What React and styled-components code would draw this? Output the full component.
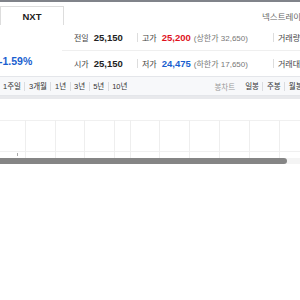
import React from 'react';
import styled, {createGlobalStyle} from 'styled-components';

const GlobalStyle = createGlobalStyle`
body{
    margin:0;
    overflow:hidden;
    background:white;
    font-family:"Liberation Sans", "Noto Sans CJK KR", sans-serif;
}
`

const quotes = [
  [
    {label:'전일', value:'25,150', width:63},
    {label:'고가', value:'25,200', tone:'up', note:'(상한가 32,650)', width:131},
    {label:'거래량', width:40},
  ],
  [
    {label:'시가', value:'25,150', width:63},
    {label:'저가', value:'24,475', tone:'down', note:'(하한가 17,650)', width:131},
    {label:'거래대금', width:40},
  ],
]

const periods = ['1주일', '3개월', '1년', '3년', '5년', '10년']
const candles = ['일봉', '주봉', '월봉']
const gridX = [25, 55, 84, 114, 130, 159, 189, 219, 249, 279]

function App() {
  return (
    <Page>
      <GlobalStyle />
      <TopBar />
      <Header>
        <Tab>NXT</Tab>
        <Market>넥스트레이드</Market>
      </Header>
      <Summary>
        <Change>-1.59%</Change>
        <Quotes>
          {quotes.map((row, i) => (
            <QuoteRow key={i} last={i === quotes.length - 1}>
              {row.map((cell, j) => (
                <Cell key={cell.label} w={cell.width} sep={j > 0}>
                  <Label>{cell.label}</Label>
                  {cell.value && <Value tone={cell.tone}>{cell.value}</Value>}
                  {cell.note && <Note>{cell.note}</Note>}
                </Cell>
              ))}
            </QuoteRow>
          ))}
        </Quotes>
      </Summary>
      <PeriodBar>
        <Group>
          {periods.map((p, i) => (
            <Item key={p} sep={i > 0}>{p}</Item>
          ))}
        </Group>
        <Group right>
          <Muted>봉차트</Muted>
          {candles.map((c, i) => (
            <Item key={c} sep={i > 0}>{c}</Item>
          ))}
        </Group>
      </PeriodBar>
      <Stripe />
      <Chart>
        <svg width="300" height="59" viewBox="0 0 300 59">
          <line x1="0" y1="21.5" x2="300" y2="21.5" stroke="#f0f0f0" />
          <line x1="0" y1="52.5" x2="300" y2="52.5" stroke="#f0f0f0" />
          {gridX.map((x) => (
            <line key={x} x1={x + 0.5} y1="21" x2={x + 0.5} y2="59" stroke="#eeeeee" />
          ))}
          <line x1="17.5" y1="54" x2="17.5" y2="57" stroke="#aaaaaa" />
        </svg>
      </Chart>
      <Scroll>
        <Thumb />
      </Scroll>
    </Page>
  )
}

const Page = styled.div`
width:300px;
height:300px;
background:white;
overflow:hidden;
`
const TopBar = styled.div`
height:2px;
background:#80838a;
`
const Header = styled.div`
height:23px;
display:flex;
justify-content:space-between;
align-items:flex-end;
`
const Tab = styled.div`
width:62px;
height:18px;
border:1px solid #dddddd;
border-bottom:none;
display:flex;
align-items:center;
justify-content:center;
font-size:9.5px;
font-weight:700;
color:#222;
`
const Market = styled.div`
align-self:center;
margin-top:5px;
width:38px;
overflow:hidden;
white-space:nowrap;
font-size:8.5px;
color:#666;
`
const Summary = styled.div`
display:flex;
height:51px;
`
const Change = styled.div`
width:63px;
flex-shrink:0;
margin-left:-1px;
padding-top:30px;
font-size:10.5px;
font-weight:700;
color:#1a5fd0;
`
const Quotes = styled.div`
flex:1;
display:flex;
flex-direction:column;
`
const QuoteRow = styled.div`
height:26px;
display:flex;
align-items:center;
padding-left:12px;
border-bottom:${p => p.last ? 'none' : '1px solid #efefef'};
box-sizing:border-box;
`
const Cell = styled.div`
position:relative;
width:${p => p.w}px;
flex-shrink:0;
display:flex;
align-items:baseline;
white-space:nowrap;
padding-left:${p => p.sep ? '5px' : '0'};
&::before{
    content:'';
    display:${p => p.sep ? 'block' : 'none'};
    position:absolute;
    left:0;
    top:1px;
    width:1px;
    height:9px;
    background:#dddddd;
}
`
const Label = styled.span`
font-size:8px;
color:#444;
margin-right:5px;
`
const Value = styled.span`
font-size:9.5px;
font-weight:700;
color:${p => p.tone === 'up' ? '#e0121e' : p.tone === 'down' ? '#1a5fd0' : '#222'};
margin-right:3px;
`
const Note = styled.span`
font-size:8px;
color:#777;
`
const PeriodBar = styled.div`
height:18px;
display:flex;
align-items:center;
background:#f7f8fa;
border-top:1px solid #e4e6ea;
border-bottom:1px solid #e4e6ea;
padding-left:3px;
white-space:nowrap;
overflow:hidden;
`
const Group = styled.div`
display:flex;
align-items:center;
flex-shrink:0;
margin-left:${p => p.right ? '87px' : '0'};
`
const Item = styled.span`
font-size:7.5px;
color:#333;
padding-left:${p => p.sep ? '3.5px' : '0'};
margin-left:${p => p.sep ? '3.5px' : '0'};
border-left:${p => p.sep ? '1px solid #dadce0' : 'none'};
line-height:9px;
`
const Muted = styled.span`
font-size:7.5px;
color:#999;
margin-right:10px;
`
const Stripe = styled.div`
height:3px;
background:#e8e9ec;
`
const Chart = styled.div`
height:59px;
svg{
    display:block;
}
`
const Scroll = styled.div`
height:6px;
background:#f4f4f4;
`
const Thumb = styled.div`
width:287px;
height:6px;
background:#858585;
border-radius:0 3px 3px 0;
`

export default App;
